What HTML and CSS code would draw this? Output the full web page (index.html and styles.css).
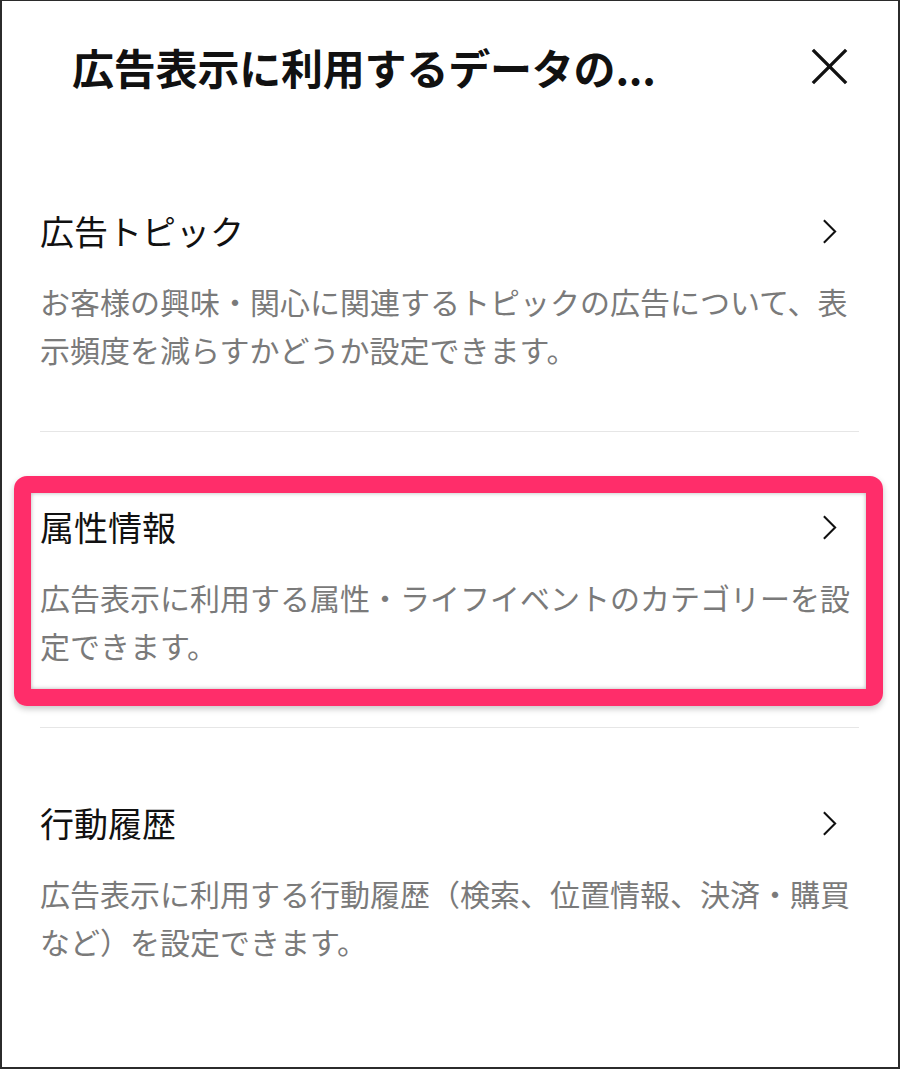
FILE: index.html
```html
<!DOCTYPE html>
<html lang="ja">
<head>
  <meta charset="UTF-8" />
  <meta name="viewport" content="width=device-width, initial-scale=1.0"/>
  <title>広告表示に利用するデータの設定</title>
  <link rel="stylesheet" href="styles.css">
</head>
<body>
  <div class="frame">

    <!-- Header -->
    <div class="header">
      <h1 class="title">広告表示に利用するデータの...</h1>
      <svg class="close" viewBox="0 0 40 40" aria-label="閉じる">
        <path d="M2 2 L38 38 M38 2 L2 38"/>
      </svg>
    </div>

    <!-- Settings list -->
    <div class="list">
      <div class="item">
        <div class="item-head">
          <span class="item-title">広告トピック</span>
          <svg class="chevron" viewBox="0 0 16 28"><path d="M2 2 L14 14 L2 26"/></svg>
        </div>
        <p class="item-desc">お客様の興味・関心に関連するトピックの広告について、表示頻度を減らすかどうか設定できます。</p>
      </div>

      <div class="item">
        <div class="item-head">
          <span class="item-title">属性情報</span>
          <svg class="chevron" viewBox="0 0 16 28"><path d="M2 2 L14 14 L2 26"/></svg>
        </div>
        <p class="item-desc">広告表示に利用する属性・ライフイベントのカテゴリーを設定できます。</p>
        <!-- annotation box -->
        <div class="highlight"></div>
      </div>

      <div class="item last">
        <div class="item-head">
          <span class="item-title">行動履歴</span>
          <svg class="chevron" viewBox="0 0 16 28"><path d="M2 2 L14 14 L2 26"/></svg>
        </div>
        <p class="item-desc">広告表示に利用する行動履歴（検索、位置情報、決済・購買など）を設定できます。</p>
      </div>
    </div>

  </div>
</body>
</html>
```

FILE: styles.css
```css
  body {
    margin: 0;
    background: #fff;
    font-family: "Noto Sans CJK JP", "Noto Sans", sans-serif;
    color: #111;
  }

  .frame {
    box-sizing: border-box;
    height: 1069px;
    border: 2px solid #2b2b2b;
    border-top-width: 1px;
    overflow: hidden;
  }

  /* Header */
  .header {
    height: 135px;
    display: flex;
    align-items: center;
    justify-content: space-between;
    padding: 0 50px 4px 70px;
    box-sizing: border-box;
  }

  .title {
    margin: 0;
    font-size: 42px;
    font-weight: 700;
    line-height: 1;
    letter-spacing: -0.2px;
  }

  .close {
    width: 37px;
    height: 37px;
  }

  .close path {
    stroke: #111;
    stroke-width: 3.6;
    fill: none;
  }

  /* List */
  .list {
    padding: 0 39px 0 38px;
  }

  .item {
    position: relative;
    padding: 73px 0 58px;
    border-bottom: 1px solid #e6e6e6;
  }

  .item.last {
    border-bottom: none;
  }

  .item-head {
    display: flex;
    align-items: center;
    justify-content: space-between;
  }

  .item-title {
    font-size: 34px;
    line-height: 44px;
  }

  .chevron {
    width: 15px;
    height: 27px;
    margin-right: 22px;
  }

  .chevron path {
    stroke: #111;
    stroke-width: 2.2;
    fill: none;
  }

  .item-desc {
    margin: 24px 0 0;
    font-size: 30px;
    line-height: 48px;
    color: #7a7a7a;
  }

  /* Pink annotation frame */
  .highlight {
    position: absolute;
    top: 44px;
    bottom: 21px;
    left: -26px;
    right: -24px;
    border: 17px solid #ff2d6a;
    border-radius: 13px;
    box-shadow: 0 3px 6px rgba(0, 0, 0, 0.22), inset 0 0 4px rgba(0, 0, 0, 0.3);
    pointer-events: none;
  }
```
